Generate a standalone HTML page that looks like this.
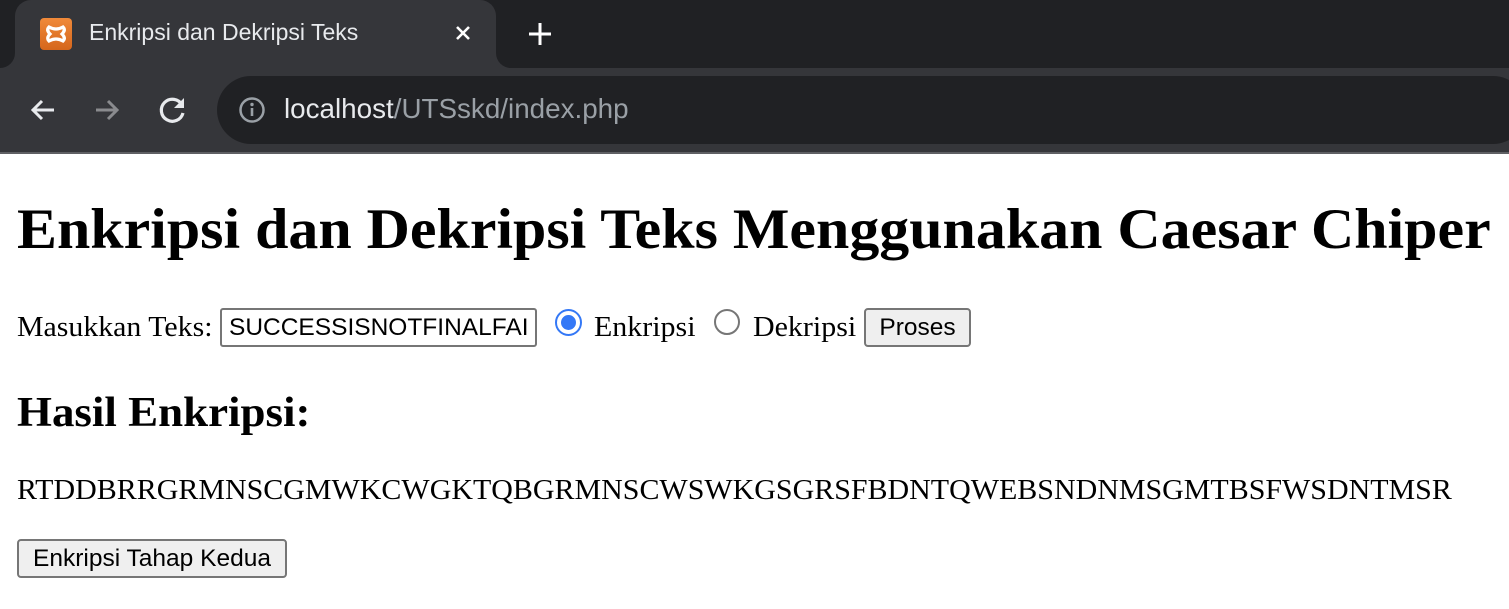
<!DOCTYPE html>
<html><head><meta charset="utf-8"><style>
*{margin:0;padding:0;box-sizing:border-box}
html,body{width:1509px;height:609px;overflow:hidden;background:#fff;position:relative}
.a{position:absolute;white-space:nowrap}
.serif{font-family:"Liberation Serif",serif;line-height:1;color:#000;transform-origin:0 0}
.ui{font-family:"Liberation Sans",sans-serif}
.btn{position:absolute;background:#efefef;border:2px solid #767676;border-radius:4px;font-family:"Liberation Sans",sans-serif;font-size:24.5px;color:#000;display:flex;align-items:center;justify-content:center}
</style></head><body>
<!-- tab strip -->
<div class="a" style="left:0;top:0;width:1509px;height:68px;background:#202124"></div>
<div class="a" style="left:15px;top:0;width:481px;height:68px;background:#35363a;border-radius:16px 16px 0 0"></div>
<div class="a" style="left:0;top:52px;width:15px;height:16px;background:#35363a"></div>
<div class="a" style="left:0;top:36px;width:15px;height:32px;background:#202124;border-bottom-right-radius:15px"></div>
<div class="a" style="left:496px;top:52px;width:15px;height:16px;background:#35363a"></div>
<div class="a" style="left:496px;top:36px;width:15px;height:32px;background:#202124;border-bottom-left-radius:15px"></div>
<div class="a" style="left:40px;top:18px;width:32px;height:32px;background:linear-gradient(#f08a3a,#d5661c);border-radius:4px"></div>
<svg class="a" style="left:40px;top:18px" width="32" height="32" viewBox="0 0 32 32"><path d="M9 9 Q16 13 23 9 Q26 12 22 16 Q26 20 23 23 Q16 19 9 23 Q6 20 10 16 Q6 12 9 9Z" fill="none" stroke="#fff" stroke-width="3.2"/></svg>
<div class="a ui" style="left:89px;top:19px;font-size:23px;color:#e8eaed">Enkripsi dan Dekripsi Teks</div>
<svg class="a" style="left:454px;top:24px" width="18" height="18" viewBox="0 0 18 18"><path d="M3 3L15 15M15 3L3 15" stroke="#fff" stroke-width="2.6"/></svg>
<svg class="a" style="left:528px;top:22px" width="24" height="24" viewBox="0 0 24 24"><path d="M12 1V23M1 12H23" stroke="#fff" stroke-width="3"/></svg>
<!-- toolbar -->
<div class="a" style="left:0;top:68px;width:1509px;height:84px;background:#35363a"></div>
<div class="a" style="left:0;top:152px;width:1509px;height:2px;background:#5f6064"></div>
<div class="a" style="left:217px;top:76px;width:1310px;height:68px;background:#202124;border-radius:34px"></div>
<svg class="a" style="left:28px;top:95px" width="30" height="30" viewBox="0 0 30 30"><path d="M26 15H5M14 6L5 15L14 24" fill="none" stroke="#e8eaed" stroke-width="3"/></svg>
<svg class="a" style="left:92px;top:95px" width="30" height="30" viewBox="0 0 30 30"><path d="M4 15H25M16 6L25 15L16 24" fill="none" stroke="#8a8b8e" stroke-width="3"/></svg>
<svg class="a" style="left:157px;top:94px" width="32" height="32" viewBox="0 0 32 32"><path d="M25 11A11 11 0 1 0 26 19" fill="none" stroke="#e8eaed" stroke-width="3.2"/><path d="M27 4V14H17Z" fill="#e8eaed"/></svg>
<svg class="a" style="left:238px;top:96px" width="28" height="28" viewBox="0 0 28 28"><circle cx="14" cy="14" r="11.5" fill="none" stroke="#9aa0a6" stroke-width="2.5"/><path d="M14 12V20" stroke="#9aa0a6" stroke-width="2.6"/><circle cx="14" cy="8.5" r="1.7" fill="#9aa0a6"/></svg>
<div class="a ui" style="left:284px;top:93px;font-size:27.8px;color:#e8eaed">localhost<span style="color:#9aa0a6">/UTSskd/index.php</span></div>
<!-- page -->
<div class="a serif" style="left:17px;top:201px;font-size:57px;font-weight:bold;transform:scaleX(1.051)">Enkripsi dan Dekripsi Teks Menggunakan Caesar Chiper</div>
<div class="a serif" style="left:17px;top:314px;font-size:28px;transform:scaleX(1.066)">Masukkan Teks:</div>
<div class="a" style="left:220px;top:308px;width:317px;height:39px;border:2px solid #767676;border-radius:3px;background:#fff;font-family:'Liberation Sans',sans-serif;font-size:24.5px;line-height:35px;padding-left:7px;overflow:hidden">SUCCESSISNOTFINALFAI</div>
<div class="a" style="left:555px;top:309px;width:27px;height:27px;border-radius:50%;border:2px solid #3478f6;background:#fff"></div>
<div class="a" style="left:561px;top:315px;width:15px;height:15px;border-radius:50%;background:#3478f6"></div>
<div class="a serif" style="left:594px;top:314px;font-size:28px;transform:scaleX(1.07)">Enkripsi</div>
<div class="a" style="left:714px;top:309px;width:26px;height:26px;border-radius:50%;border:2px solid #767676;background:#fff"></div>
<div class="a serif" style="left:753px;top:314px;font-size:28px;transform:scaleX(1.07)">Dekripsi</div>
<div class="btn" style="left:864px;top:308px;width:107px;height:39px">Proses</div>
<div class="a serif" style="left:17px;top:392px;font-size:42px;font-weight:bold;transform:scaleX(1.07)">Hasil Enkripsi:</div>
<div class="a serif" style="left:17px;top:477px;font-size:28px;transform:scaleX(1.07)">RTDDBRRGRMNSCGMWKCWGKTQBGRMNSCWSWKGSGRSFBDNTQWEBSNDNMSGMTBSFWSDNTMSR</div>
<div class="btn" style="left:17px;top:539px;width:270px;height:39px">Enkripsi Tahap Kedua</div>
</body></html>
